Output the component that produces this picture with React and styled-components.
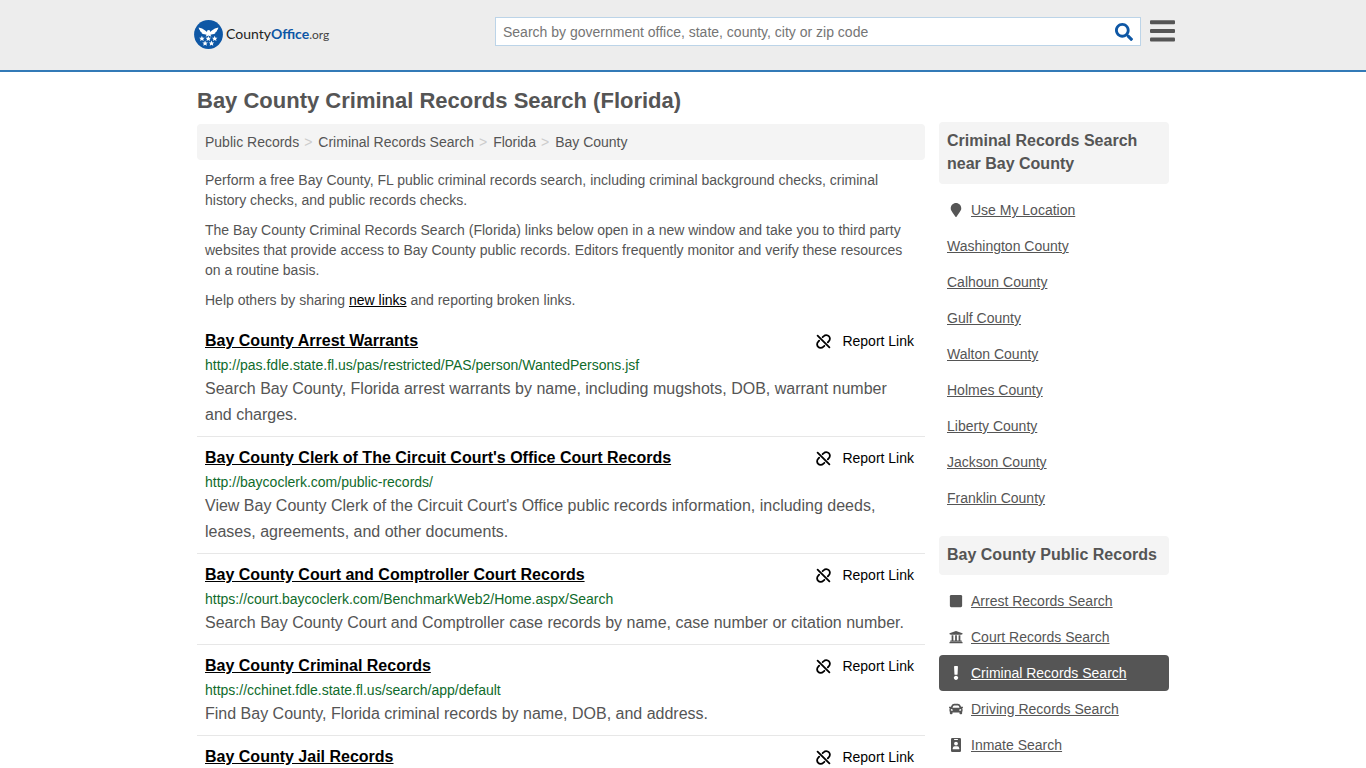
import React from 'react';
import styled, { createGlobalStyle } from 'styled-components';
import { FaMapMarker, FaSquare, FaUniversity, FaExclamation, FaCar, FaSearch } from 'react-icons/fa';

const GlobalStyle = createGlobalStyle`
  *, *::before, *::after { box-sizing: border-box; }
  body {
    margin: 0;
    background: #fff;
    color: #555;
    font: 14px/20px "Liberation Sans", Arial, sans-serif;
  }
`;

const Header = styled.header`
  background: #ededed;
  border-bottom: 2px solid #337ab7;
  padding: 0 8px 24px;
`;

const HeaderInner = styled.div`
  display: flex;
  align-items: flex-end;
  max-width: 984px;
  margin: 0 auto;
  padding-top: 15px;
`;

const Brand = styled.a`
  display: flex;
  align-items: center;
  gap: 3px;
  flex: 1;
  height: 34px;
  margin: 0 3px -5px;
  color: #222;
  font: 14px/20px Lato, sans-serif;
  text-decoration: none;
`;

const BrandMark = styled.svg`
  width: 29px;
  height: 29px;
`;

const BrandStrong = styled.strong`
  color: #0e57a5;
`;

const BrandSuffix = styled.span`
  color: #444;
  font-size: 12px;
`;

const SearchForm = styled.form`
  display: flex;
  width: 646px;
  height: 29px;
  margin-top: 2px;
  background: #fff;
  border: 1px solid #bcd4e8;
`;

const SearchInput = styled.input`
  flex: 1;
  min-width: 0;
  border: 0;
  outline: 0;
  padding: 0 7px;
  background: transparent;
  color: #555;
  font: inherit;
  &::placeholder { color: #757575; opacity: 1; }
`;

const IconButton = styled.button`
  display: flex;
  align-items: center;
  justify-content: center;
  width: ${(p) => p.$width}px;
  padding: 0;
  border: 0;
  background: transparent;
  color: ${(p) => p.$color};
  cursor: pointer;
`;

const MenuButton = styled(IconButton)`
  height: 29px;
  margin-left: 8px;
`;

const Page = styled.div`
  max-width: 988px;
  margin: 0 auto;
  padding: 16px 8px 0;
`;

const Title = styled.h1`
  margin: 0 0 10px;
  font-size: 22px;
  line-height: 26px;
`;

const Columns = styled.div`
  display: flex;
  align-items: flex-start;
  gap: 14px;
`;

const Main = styled.main`
  flex: 1;
  min-width: 0;
`;

const Crumbs = styled.nav`
  padding: 8px;
  border-radius: 4px;
  background: #f4f4f4;
`;

const CrumbList = styled.ol`
  display: flex;
  margin: 0;
  padding: 0;
  list-style: none;
`;

const Crumb = styled.li`
  &:not(:last-child)::after {
    content: ">";
    padding: 0 6px 0 5px;
    color: #ccc;
  }
`;

const CrumbLink = styled.a`
  color: #555;
  text-decoration: none;
`;

const Intro = styled.div`
  padding: 10px 8px 8px;
`;

const Paragraph = styled.p`
  margin: 0 0 10px;
`;

const InlineLink = styled.a`
  color: #000;
`;

const Results = styled.ul`
  margin: 0;
  padding: 0;
  list-style: none;
`;

const Result = styled.li`
  padding: 8px;
  border-bottom: 1px solid #e7e7e7;
  font-size: 16px;
  line-height: 26px;
  &:first-child { padding-top: 0; }
  &:last-child { border: 0; padding-bottom: 0; }
`;

const ResultHead = styled.div`
  display: flex;
  justify-content: space-between;
`;

const ResultTitle = styled.a`
  color: #000;
  font-weight: bold;
`;

const ReportButton = styled.button`
  display: flex;
  align-items: center;
  gap: 11px;
  padding: 0 3px;
  border: 0;
  background: transparent;
  color: #000;
  font: inherit;
  font-size: 14px;
  cursor: pointer;
`;

const ResultUrl = styled.div`
  color: #0f6b2b;
  font-size: 14px;
  line-height: 22px;
`;

const ResultText = styled.p`
  margin: 0;
`;

const Sidebar = styled.aside`
  width: 230px;
  margin-top: -2px;
`;

const Panel = styled.section`
  margin-bottom: 20px;
`;

const PanelTitle = styled.h2`
  margin: 0 0 8px;
  padding: 7px 8px 9px;
  border-radius: 4px;
  background: #f4f4f4;
  font-size: 16px;
  line-height: 23px;
`;

const SideList = styled.ul`
  margin: 0;
  padding: 0;
  list-style: none;
`;

const SideLink = styled.a`
  display: flex;
  align-items: center;
  gap: 6px;
  padding: 8px;
  border-radius: 4px;
  background: ${(p) => (p.$active ? '#555' : 'transparent')};
  color: ${(p) => (p.$active ? '#fff' : '#555')};
`;

const IconSlot = styled.span`
  display: flex;
  justify-content: center;
  width: 18px;
`;

const results = [
  ['Bay County Arrest Warrants', 'http://pas.fdle.state.fl.us/pas/restricted/PAS/person/WantedPersons.jsf', 'Search Bay County, Florida arrest warrants by name, including mugshots, DOB, warrant number and charges.'],
  ["Bay County Clerk of The Circuit Court's Office Court Records", 'http://baycoclerk.com/public-records/', "View Bay County Clerk of the Circuit Court's Office public records information, including deeds, leases, agreements, and other documents."],
  ['Bay County Court and Comptroller Court Records', 'https://court.baycoclerk.com/BenchmarkWeb2/Home.aspx/Search', 'Search Bay County Court and Comptroller case records by name, case number or citation number.'],
  ['Bay County Criminal Records', 'https://cchinet.fdle.state.fl.us/search/app/default', 'Find Bay County, Florida criminal records by name, DOB, and address.'],
  ['Bay County Jail Records'],
];

const nearby = ['Washington', 'Calhoun', 'Gulf', 'Walton', 'Holmes', 'Liberty', 'Jackson', 'Franklin'];

const records = [
  ['Arrest Records Search', FaSquare],
  ['Court Records Search', FaUniversity],
  ['Criminal Records Search', FaExclamation],
  ['Driving Records Search', FaCar],
  ['Inmate Search', BadgeIcon],
];

const stars = [[7.9, 18.7], [14.3, 18.7], [20.7, 18.7], [11.1, 23.4], [17.5, 23.4]];
const starPath = 'M0-2.9L.8-1 2.8-.9 1.3.4 1.8 2.4 0 1.3-1.8 2.4-1.3.4-2.8-.9-.8-1Z';

function Logo() {
  return (
    <BrandMark viewBox="0 0 29 29" aria-hidden="true">
      <circle cx="14.5" cy="14.5" r="14.4" fill="#0e57a5" />
      <path
        fill="#fff"
        d="M4.6 7.4Q8.5 8 10.8 10.2L13 12 13.2 10.6 14.7 9.9 16 10.6 16 12 18.2 10.2Q20.5 8 24.4 7.4 24.2 9.6 22.8 10.4L23.2 10.6Q22.5 12.2 21.2 12.6L21.5 12.9Q20.3 14.1 18.5 14.2L16.4 14.8 17.4 16.8 14.5 15.6 11.6 16.8 12.6 14.8 10.5 14.2Q8.7 14.1 7.5 12.9L7.8 12.6Q6.5 12.2 5.8 10.6L6.2 10.4Q4.8 9.6 4.6 7.4Z"
      />
      {stars.map(([x, y]) => (
        <path key={`${x}-${y}`} d={starPath} transform={`translate(${x} ${y})`} fill="#fff" />
      ))}
    </BrandMark>
  );
}

function BrokenLinkIcon() {
  return (
    <svg width="15" height="15" viewBox="0 0 15 15" fill="none" stroke="currentColor" strokeWidth="1.8" strokeLinecap="round" aria-hidden="true">
      <path d="M1.6 1.6L13.4 13.4" />
      <path d="M6.6 3.2L7.8 2.1A3.4 3.4 0 0 1 12.8 2.2A3.4 3.4 0 0 1 12.9 7.1L11.8 8.4" />
      <path d="M3.2 6.6L2.1 7.9A3.4 3.4 0 0 0 2.2 12.8A3.4 3.4 0 0 0 7.2 12.9L8.4 11.8" />
    </svg>
  );
}

function BadgeIcon() {
  return (
    <svg width="12" height="14" viewBox="0 0 12 14" aria-hidden="true">
      <rect x="1" width="10" height="14" rx="1.2" fill="currentColor" />
      <g fill="#fff">
        <rect x="4" y="1" width="4" height="1" rx=".5" />
        <circle cx="6" cy="5.6" r="1.9" />
        <path d="M2.8 11.2V10.2Q2.8 8.3 4.7 8.3H7.3Q9.2 8.3 9.2 10.2V11.2Z" />
      </g>
    </svg>
  );
}

function SideItem({ label, icon: Icon, active }) {
  return (
    <li>
      <SideLink href="#" $active={active} aria-current={active ? 'page' : undefined}>
        {Icon && <IconSlot><Icon size={14} aria-hidden="true" /></IconSlot>}
        {label}
      </SideLink>
    </li>
  );
}

export default function App() {
  return (
    <>
      <GlobalStyle />
      <Header>
        <HeaderInner>
          <Brand href="#">
            <Logo />
            <span>County<BrandStrong>Office</BrandStrong><BrandSuffix>.org</BrandSuffix></span>
          </Brand>
          <SearchForm role="search" onSubmit={(e) => e.preventDefault()}>
            <SearchInput type="text" aria-label="Search" placeholder="Search by government office, state, county, city or zip code" />
            <IconButton type="submit" aria-label="Search" $width={32} $color="#0e57a5">
              <FaSearch size={18} />
            </IconButton>
          </SearchForm>
          <MenuButton type="button" aria-label="Menu" $width={26} $color="#555">
            <svg width="26" height="24" viewBox="0 0 26 24" fill="currentColor" aria-hidden="true">
              <rect x="1" y="0.3" width="25" height="4" rx="1" />
              <rect x="1" y="9" width="25" height="4" rx="1" />
              <rect x="1" y="17.5" width="25" height="4" rx="1" />
            </svg>
          </MenuButton>
        </HeaderInner>
      </Header>
      <Page>
        <Title>Bay County Criminal Records Search (Florida)</Title>
        <Columns>
          <Main>
            <Crumbs aria-label="Breadcrumb">
              <CrumbList>
                {['Public Records', 'Criminal Records Search', 'Florida', 'Bay County'].map((c) => (
                  <Crumb key={c}><CrumbLink href="#">{c}</CrumbLink></Crumb>
                ))}
              </CrumbList>
            </Crumbs>
            <Intro>
              <Paragraph>Perform a free Bay County, FL public criminal records search, including criminal background checks, criminal history checks, and public records checks.</Paragraph>
              <Paragraph>The Bay County Criminal Records Search (Florida) links below open in a new window and take you to third party websites that provide access to Bay County public records. Editors frequently monitor and verify these resources on a routine basis.</Paragraph>
              <Paragraph>Help others by sharing <InlineLink href="#">new links</InlineLink> and reporting broken links.</Paragraph>
            </Intro>
            <Results>
              {results.map(([title, url, text]) => (
                <Result key={title}>
                  <ResultHead>
                    <ResultTitle href="#">{title}</ResultTitle>
                    <ReportButton type="button"><BrokenLinkIcon />Report Link</ReportButton>
                  </ResultHead>
                  {url && <ResultUrl>{url}</ResultUrl>}
                  {text && <ResultText>{text}</ResultText>}
                </Result>
              ))}
            </Results>
          </Main>
          <Sidebar>
            <Panel>
              <PanelTitle>Criminal Records Search near Bay County</PanelTitle>
              <SideList>
                <SideItem label="Use My Location" icon={FaMapMarker} />
                {nearby.map((n) => <SideItem key={n} label={`${n} County`} />)}
              </SideList>
            </Panel>
            <Panel>
              <PanelTitle>Bay County Public Records</PanelTitle>
              <SideList>
                {records.map(([label, icon]) => (
                  <SideItem key={label} label={label} icon={icon} active={label.startsWith('Criminal')} />
                ))}
              </SideList>
            </Panel>
          </Sidebar>
        </Columns>
      </Page>
    </>
  );
}
